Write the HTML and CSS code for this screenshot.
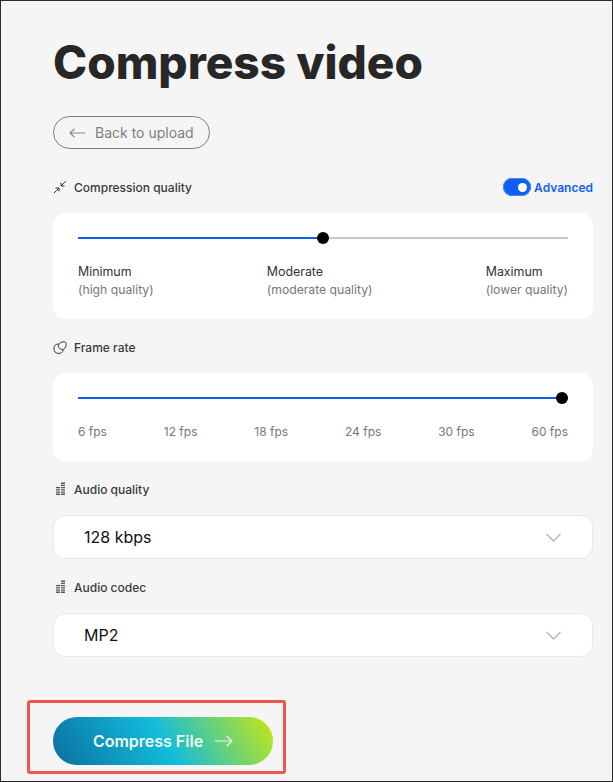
FILE: index.html
```html
<!DOCTYPE html>
<html lang="en">
<head>
  <meta charset="UTF-8">
  <meta name="viewport" content="width=device-width, initial-scale=1.0">
  <title>Compress video</title>
  <link rel="stylesheet" href="styles.css">
</head>
<body>
  <div class="frame">
    <h1>Compress video</h1>

    <button class="back-btn">
      <svg width="17" height="10" viewBox="0 0 17 10" fill="none" stroke="#8a8a8a" stroke-width="1.2"><path d="M16 5H1M5.500 .8 1 5l4.500 4.200"/></svg>
      Back to upload
    </button>

    <div class="label-row first">
      <div class="label">
        <svg class="icon" width="14" height="14" viewBox="0 0 14 14" fill="none" stroke="#333" stroke-width="1"><path d="M13 1 8 6M8 2.500V6h3.500M1 13l5-5M2.500 8H6v3.500"/></svg>
        Compression quality
      </div>
      <div class="advanced">
        <span class="toggle"><span class="knob"></span></span>
        Advanced
      </div>
    </div>
    <div class="panel quality-panel">
      <div class="slider"><span class="fill half"></span><span class="thumb half-thumb"></span></div>
      <div class="quality-labels">
        <div>Minimum<small>(high quality)</small></div>
        <div>Moderate<small>(moderate quality)</small></div>
        <div>Maximum<small>(lower quality)</small></div>
      </div>
    </div>

    <div class="label-row">
      <div class="label">
        <svg class="icon" width="14" height="14" viewBox="0 0 14 14" fill="none" stroke="#333" stroke-width="1"><path d="M5.500 4A4.700 4.700 0 1 0 10.300 9.500M5.500 5C6.500 2.500 9.500 1.500 11.500 1.800c1.800.3 2 2.200 1.500 4-.6 2-1.800 3.700-3.500 3.700-2 0-5-2-4-4.500Z"/></svg>
        Frame rate
      </div>
    </div>
    <div class="panel fps-panel">
      <div class="slider"><span class="fill full"></span><span class="thumb end-thumb"></span></div>
      <div class="fps-labels">
        <span>6 fps</span><span>12 fps</span><span>18 fps</span><span>24 fps</span><span>30 fps</span><span>60 fps</span>
      </div>
    </div>

    <div class="label-row">
      <div class="label">
        <svg class="icon" width="14" height="14" viewBox="0 0 14 14" fill="#555"><path d="M3 5h4v1.300H3zM3 7.200h4v1.300H3zM3 9.400h4v1.300H3zM3 11.600h4v1.300H3zM8 .6h4v1.300H8zM8 2.800h4v1.300H8zM8 5h4v1.300H8zM8 7.200h4v1.300H8zM8 9.400h4v1.300H8zM8 11.600h4v1.300H8z"/></svg>
        Audio quality
      </div>
    </div>
    <div class="select">
      128 kbps
      <svg width="15" height="9" viewBox="0 0 15 9" fill="none" stroke="#aaa" stroke-width="1.200"><path d="M.4 .8 7.500 8l7.100-7.200"/></svg>
    </div>

    <div class="label-row">
      <div class="label">
        <svg class="icon" width="14" height="14" viewBox="0 0 14 14" fill="#555"><path d="M3 5h4v1.300H3zM3 7.200h4v1.300H3zM3 9.400h4v1.300H3zM3 11.600h4v1.300H3zM8 .6h4v1.300H8zM8 2.800h4v1.300H8zM8 5h4v1.300H8zM8 7.200h4v1.300H8zM8 9.400h4v1.300H8zM8 11.600h4v1.300H8z"/></svg>
        Audio codec
      </div>
    </div>
    <div class="select">
      MP2
      <svg width="15" height="9" viewBox="0 0 15 9" fill="none" stroke="#aaa" stroke-width="1.200"><path d="M.4 .8 7.500 8l7.100-7.200"/></svg>
    </div>

    <div class="submit-box">
      <button class="compress-btn">
        Compress File
        <svg width="18" height="12" viewBox="0 0 18 12" fill="none" stroke="#eefaf0" stroke-width="1.200"><path d="M0 6h17M11.500 .8 17 6l-5.500 5.200"/></svg>
      </button>
    </div>
  </div>
</body>
</html>
```

FILE: styles.css
```css
* {
    box-sizing: border-box;
}

html, body {
    margin: 0;
    padding: 0;
}

body {
    font-family: Inter, "Liberation Sans", sans-serif;
    background-color: #f5f5f5;
    color: #2a2a2a;
}

.frame {
    width: 613px;
    height: 782px;
    overflow: hidden;
    border: 1px solid #2b2b2b;
    padding: 0 19px 0 52px;
    background-color: #f5f5f5;
}

h1 {
    margin: 35px 0 0;
    font-size: 46px;
    line-height: 52px;
    font-weight: 800;
    color: #272727;
}

.back-btn {
    display: flex;
    align-items: center;
    gap: 9px;
    width: 157px;
    height: 33px;
    margin-top: 28px;
    padding: 0 0 0 15px;
    border: 1px solid #7d7d7d;
    border-radius: 17px;
    background: none;
    font-family: inherit;
    font-size: 14px;
    color: #808080;
}

.label-row {
    display: flex;
    justify-content: space-between;
    align-items: center;
    height: 20px;
    margin-top: 18px;
}

.label-row.first {
    margin-top: 28px;
}

.label {
    display: flex;
    align-items: center;
    gap: 7px;
    font-size: 12px;
    font-weight: 500;
    color: #3a3a3a;
}

.advanced {
    display: flex;
    align-items: center;
    gap: 3px;
    font-size: 12px;
    font-weight: 600;
    color: #0d5ff5;
}

.toggle {
    display: flex;
    align-items: center;
    justify-content: flex-end;
    width: 28px;
    height: 18px;
    padding-right: 4px;
    border-radius: 9px;
    background-color: #0d5ff5;
    box-shadow: inset 0 0 0 1px #4d84e8;
}

.knob {
    width: 9px;
    height: 9px;
    border-radius: 50%;
    background-color: #fff;
}

.panel {
    margin-top: 16px;
    padding: 0 25px;
    border-radius: 12px;
    background-color: #fff;
}

.quality-panel {
    height: 106px;
    padding-top: 24px;
}

.fps-panel {
    height: 88px;
    padding-top: 24px;
}

.slider {
    position: relative;
    height: 2px;
    background-color: #c8c8c8;
}

.fill {
    display: block;
    height: 2px;
    background-color: #0d5ff5;
}

.fill.half {
    width: 50%;
}

.fill.full {
    width: 100%;
}

.thumb {
    position: absolute;
    top: -5px;
    width: 12px;
    height: 12px;
    border-radius: 50%;
    background-color: #000;
}

.half-thumb {
    left: calc(50% - 6px);
}

.end-thumb {
    right: 0;
}

.quality-labels {
    display: flex;
    justify-content: space-between;
    margin-top: 24px;
    font-size: 12.400px;
    line-height: 18px;
    color: #333;
}

.quality-labels small {
    display: block;
    font-size: 12.200px;
    color: #777;
}

.fps-labels {
    display: flex;
    justify-content: space-between;
    margin-top: 24px;
    font-size: 12px;
    line-height: 18px;
    color: #777;
}

.select {
    display: flex;
    justify-content: space-between;
    align-items: center;
    height: 44px;
    margin-top: 16px;
    padding: 0 31px 0 30px;
    border: 1px solid #e8e8e8;
    border-radius: 12px;
    background-color: #fff;
    font-size: 16px;
    color: #111;
}

.submit-box {
    width: 259px;
    height: 74px;
    margin: 43px 0 0 -26px;
    padding: 14px 0 0 23px;
    border: 3px solid #f0564a;
    border-radius: 3px;
}

.compress-btn {
    display: flex;
    align-items: center;
    justify-content: center;
    gap: 12px;
    width: 220px;
    height: 48px;
    padding: 0;
    border: none;
    border-radius: 24px;
    background: linear-gradient(58deg, #0a6f9f 0%, #12bcdc 50%, #c8e810 100%);
    font-family: inherit;
    font-size: 16px;
    font-weight: 600;
    color: #eefaf0;
}
```
